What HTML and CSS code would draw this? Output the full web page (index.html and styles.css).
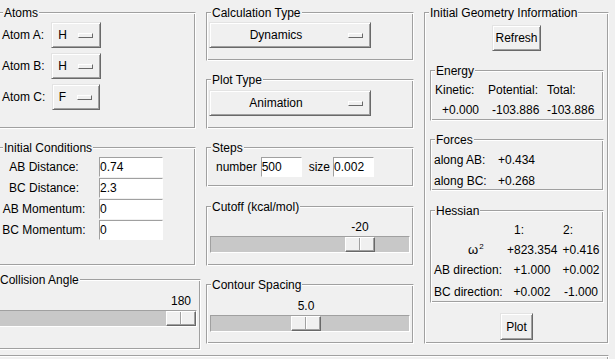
FILE: index.html
```html
<!DOCTYPE html>
<html>
<head>
<meta charset="utf-8">
<title>Collinear reaction</title>
<link rel="stylesheet" href="styles.css">
</head>
<body>
<div class="app">
  <div class="col">
    <section class="frame atoms">
      <div class="frame-title">Atoms</div>
      <div class="atom-grid">
        <span class="lbl">Atom A:</span>
        <button class="btn menubtn"><span class="mb-text">H</span><span class="ind"></span></button>
        <span class="lbl">Atom B:</span>
        <button class="btn menubtn"><span class="mb-text">H</span><span class="ind"></span></button>
        <span class="lbl">Atom C:</span>
        <button class="btn menubtn"><span class="mb-text">F</span><span class="ind"></span></button>
      </div>
    </section>
    <section class="frame init">
      <div class="frame-title">Initial Conditions</div>
      <div class="form-grid">
        <span class="lbl">AB Distance:</span><input class="entry entry-wide" value="0.74">
        <span class="lbl">BC Distance:</span><input class="entry entry-wide" value="2.3">
        <span class="lbl">AB Momentum:</span><input class="entry entry-wide" value="0">
        <span class="lbl">BC Momentum:</span><input class="entry entry-wide" value="0">
      </div>
    </section>
    <section class="frame collision">
      <div class="frame-title">Collision Angle</div>
      <div class="scale scale-collision" style="--pos:168px">
        <div class="scale-value">180</div>
        <div class="trough"><div class="thumb"></div></div>
      </div>
    </section>
  </div>

  <div class="col">
    <section class="frame calc">
      <div class="frame-title">Calculation Type</div>
      <button class="btn menubtn wide"><span class="mb-text">Dynamics</span><span class="ind"></span></button>
    </section>
    <section class="frame plot">
      <div class="frame-title">Plot Type</div>
      <button class="btn menubtn wide"><span class="mb-text">Animation</span><span class="ind"></span></button>
    </section>
    <section class="frame steps">
      <div class="frame-title">Steps</div>
      <div class="steps-row">
        <span>number</span><input class="entry entry-small e-num" value="500">
        <span class="size-lbl">size</span><input class="entry entry-small e-size" value="0.002">
      </div>
    </section>
    <section class="frame cutoff">
      <div class="frame-title">Cutoff (kcal/mol)</div>
      <div class="scale scale-cutoff" style="--pos:134px">
        <div class="scale-value">-20</div>
        <div class="trough"><div class="thumb"></div></div>
      </div>
    </section>
    <section class="frame contour">
      <div class="frame-title">Contour Spacing</div>
      <div class="scale scale-contour" style="--pos:80px">
        <div class="scale-value">5.0</div>
        <div class="trough"><div class="thumb"></div></div>
      </div>
    </section>
  </div>

  <div class="col">
    <section class="frame geo">
      <div class="frame-title">Initial Geometry Information</div>
      <button class="btn refresh">Refresh</button>
      <section class="frame sub energy">
        <div class="frame-title">Energy</div>
        <div class="energy-grid">
          <span>Kinetic:</span><span>Potential:</span><span>Total:</span>
          <span class="v1">+0.000</span><span class="v2">-103.886</span><span class="v3">-103.886</span>
        </div>
      </section>
      <section class="frame sub forces">
        <div class="frame-title">Forces</div>
        <div class="forces-grid">
          <span>along AB:</span><span>+0.434</span>
          <span>along BC:</span><span>+0.268</span>
        </div>
      </section>
      <section class="frame sub hessian">
        <div class="frame-title">Hessian</div>
        <div class="hessian-grid">
          <span></span><span class="h1">1:</span><span class="h2">2:</span>
          <span class="omega">ω<sup>2</sup></span><span class="c">+823.354</span><span class="c">+0.416</span>
          <span>AB direction:</span><span class="c">+1.000</span><span class="c">+0.002</span>
          <span>BC direction:</span><span class="c">+0.002</span><span class="c">-1.000</span>
        </div>
      </section>
      <button class="btn plot-btn">Plot</button>
    </section>
  </div>

  <div class="frame footer"></div>
</div>
</body>
</html>
```

FILE: styles.css
```css
html, body {
  margin: 0;
  background: #f0f0f0;
  overflow: hidden;
}

body {
  font-family: "Liberation Sans", Arial, sans-serif;
  font-size: 12px;
  line-height: 14px;
  color: #000;
}

.app {
  display: grid;
  grid-template-columns: 198px 208px 185px;
  column-gap: 10px;
  align-items: start;
  margin-left: -2px;
  padding-top: 12px;
}

.col {
  display: flex;
  flex-direction: column;
}

/* Tk groove frame */
.frame {
  box-sizing: border-box;
  border: 1px solid;
  border-color: #a0a0a0 #fff #fff #a0a0a0;
  box-shadow: inset 1px 1px #fff, inset -1px -1px #a0a0a0;
}

.frame-title {
  width: fit-content;
  margin: -7px 0 0 4px;
  padding: 0 1px;
  background: #f0f0f0;
  line-height: 14px;
  white-space: nowrap;
}

/* column 1 */
.atoms { height: 117px; }
.init { height: 119px; margin-top: 18px; }
.collision { height: 71px; margin: 13px -5px 0 -4px; }

/* column 2 */
.calc { height: 49px; }
.plot { height: 50px; margin-top: 18px; }
.steps { height: 40px; margin-top: 18px; }
.cutoff { height: 60px; margin-top: 19px; }
.contour { height: 60px; margin-top: 18px; }

/* column 3 */
.geo {
  height: 332px;
  display: flex;
  flex-direction: column;
}
.sub { margin-left: 5px; margin-right: 4px; }
.energy { height: 51px; margin-top: 19px; }
.forces { height: 52px; margin-top: 18px; }
.hessian { height: 93px; margin-top: 19px; }

.footer {
  grid-column: 1 / -1;
  margin-top: 5px;
  height: 14px;
}

/* buttons */
.btn {
  box-sizing: border-box;
  height: 26px;
  margin: 0;
  padding: 0;
  font: inherit;
  color: #000;
  background: #f0f0f0;
  border: 1px solid;
  border-color: #e3e3e3 #696969 #696969 #e3e3e3;
  box-shadow: inset 1px 1px #fff, inset -1px -1px #a0a0a0;
  border-radius: 0;
}

.menubtn {
  display: flex;
  align-items: center;
  padding: 0 7px 0 6px;
}

.ind {
  box-sizing: border-box;
  width: 15px;
  height: 5px;
  margin-left: 11px;
  border: 1px solid;
  border-color: #fff #696969 #696969 #fff;
  background: #f0f0f0;
}

.menubtn.wide {
  width: 162px;
  padding-left: 0;
}
.wide .mb-text {
  flex: 1;
  text-align: center;
}
.wide .ind { margin-left: 6px; }

.calc .menubtn { margin: 2px 0 0 2px; }
.plot .menubtn { margin: 3px 0 0 2px; }

.refresh {
  align-self: center;
  width: 49px;
  margin-top: 5px;
}
.plot-btn {
  align-self: center;
  width: 33px;
  height: 27px;
  margin-top: 10px;
}

/* atoms grid */
.atom-grid {
  display: grid;
  grid-template-columns: 48px 52px;
  row-gap: 5px;
  align-items: center;
  justify-items: center;
  margin: 2px 0 0 3px;
}
.atom-grid .lbl { justify-self: start; }

/* entries */
.entry {
  box-sizing: border-box;
  height: 20px;
  margin: 0;
  padding: 0;
  font: inherit;
  color: #000;
  background: #fff;
  border: 1px solid;
  border-color: #a0a0a0 #fff #fff #a0a0a0;
  border-radius: 0;
  outline: none;
}
.entry-wide { width: 64px; }
.entry-small { width: 41px; }

.form-grid {
  display: grid;
  grid-template-columns: 86px 64px;
  column-gap: 12px;
  row-gap: 1px;
  align-items: center;
  margin: 2px 0 0 2px;
}
.form-grid .lbl { text-align: center; white-space: nowrap; }

.steps-row {
  display: flex;
  align-items: center;
  margin: 2px 0 0 9px;
}
.e-num { margin-left: 4px; }
.size-lbl { margin-left: 7px; }
.e-size { margin-left: 3px; }

/* scales */
.scale {
  width: 200px;
  margin: 7px 0 0 3px;
}
.scale-cutoff { margin-top: 6px; }
.scale-collision { margin-left: 2px; }

.scale-value {
  width: 30px;
  height: 14px;
  margin-left: calc(var(--pos) + 1px);
  text-align: center;
  white-space: nowrap;
}

.trough {
  position: relative;
  box-sizing: border-box;
  height: 17px;
  margin-top: 2px;
  background: #c8c8c8;
  border: 1px solid;
  border-color: #a0a0a0 #fff #fff #a0a0a0;
}

.thumb {
  position: absolute;
  top: 0;
  left: var(--pos);
  box-sizing: border-box;
  width: 30px;
  height: 15px;
  background: #f0f0f0;
  border: 1px solid;
  border-color: #fff #696969 #696969 #fff;
  box-shadow: inset -1px -1px #a0a0a0;
}
.thumb::after {
  content: "";
  position: absolute;
  left: 13px;
  top: 0;
  bottom: 1px;
  width: 1px;
  background: #a0a0a0;
  box-shadow: 1px 0 #fff;
}

/* info grids */
.energy-grid {
  display: grid;
  grid-template-columns: 53px 59px 1fr;
  grid-auto-rows: 20px;
  align-items: center;
  margin: 2px 0 0 4px;
  white-space: nowrap;
}
.v1 { padding-left: 7px; }
.v2 { padding-left: 4px; }

.forces-grid {
  display: grid;
  grid-template-columns: 64px 1fr;
  grid-auto-rows: 21px;
  align-items: center;
  margin: 2px 0 0 3px;
  white-space: nowrap;
}

.hessian-grid {
  display: grid;
  grid-template-columns: 73px 50px 48px;
  grid-template-rows: 20px 19px 22px 21px;
  align-items: center;
  margin: 2px 0 0 3px;
  white-space: nowrap;
}
.hessian-grid .c { text-align: center; }
.h1 { padding-left: 7px; }
.h2 { padding-left: 6px; }
.omega { padding-left: 34px; font-size: 13px; }
.omega sup {
  font-size: 8px;
  line-height: 0;
  vertical-align: 5px;
  margin-left: 1px;
}
```
